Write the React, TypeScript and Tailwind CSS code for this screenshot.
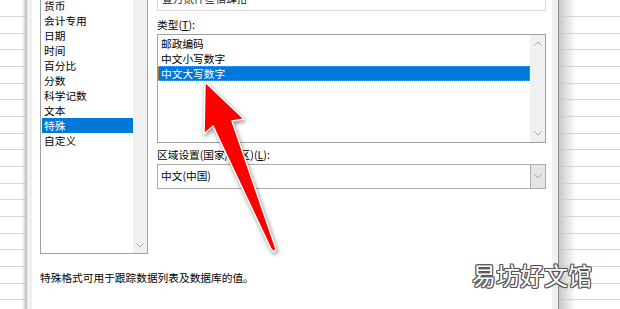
import React from "react";

// 常规 and 数值 sit above the visible area, so the list starts at 货币
const categories = ["货币", "会计专用", "日期", "时间", "百分比", "分数", "科学记数", "文本", "特殊", "自定义"];
const types = ["邮政编码", "中文小写数字", "中文大写数字"];

function Chevron({ up }: { up?: boolean }) {
  return (
    <svg width="8" height="5" viewBox="0 0 8 5" className="block">
      <polyline
        points={up ? "0.5,4.5 4,1 7.5,4.5" : "0.5,0.5 4,4 7.5,0.5"}
        fill="none"
        stroke="#a6a6a6"
        strokeWidth="1"
      />
    </svg>
  );
}

function SheetRows() {
  return (
    <div className="flex flex-col pt-[0.5px]">
      {Array.from({ length: 19 }).map((_, i) => (
        <div key={i} className="h-[16.66px] shrink-0 border-b border-[#d6d6d6]" />
      ))}
    </div>
  );
}

export default function App() {
  return (
    <div className="relative flex h-[309px] w-[620px] overflow-hidden bg-white font-['Noto_Sans_CJK_SC',sans-serif] text-[10.7px] text-black">
      {/* sheet behind the dialog, left */}
      <div className="relative w-[27px] shrink-0">
        <SheetRows />
        <div className="absolute inset-y-0 right-0 w-[5px] bg-linear-to-r from-transparent to-[#b9b9b9]" />
      </div>
      <div className="w-[5px] shrink-0 bg-[#f0f0f0]" />

      {/* tab page */}
      <div className="flex w-[520px] shrink-0 flex-col bg-white pl-[8px]">
        <div className="flex items-start gap-[9px]">
          {/* category list */}
          <div className="-mt-[4px] flex h-[258px] w-[108px] shrink-0 border border-[#a0a0a0]">
            <div className="flex flex-1 flex-col pl-[1px] pt-[1px]">
              {categories.map((c) => (
                <div
                  key={c}
                  className={`h-[15px] shrink-0 pl-[2px] leading-[15px] ${c === "特殊" ? "bg-[#0078d7] text-white" : ""}`}
                >
                  {c}
                </div>
              ))}
            </div>
            <div className="flex w-[14px] flex-col items-center justify-end bg-[#f0f0f0] pb-[5px]">
              <Chevron />
            </div>
          </div>

          {/* right column */}
          <div className="-mt-[20px] flex w-[389px] shrink-0 flex-col">
            <div className="h-[31px] border border-[#d9d9d9] pl-[4px] pt-[10px] leading-[15px] text-[#222]">
              壹万贰仟叁佰肆拾
            </div>

            <div className="mt-[7px] h-[14px] leading-[14px]">
              类型(<span className="underline underline-offset-1">T</span>):
            </div>
            <div className="mt-[2px] flex h-[109px] border border-[#a0a0a0]">
              <div className="flex flex-1 flex-col pt-[1px]">
                {types.map((t) => (
                  <div
                    key={t}
                    className={`h-[15px] shrink-0 pl-[3px] leading-[15px] ${
                      t === "中文大写数字"
                        ? "bg-[#0078d7] text-white outline-1 -outline-offset-1 outline-dotted outline-[#c8904a]"
                        : ""
                    }`}
                  >
                    {t}
                  </div>
                ))}
              </div>
              <div className="flex w-[15px] flex-col items-center justify-between bg-[#f0f0f0] py-[6px]">
                <Chevron up />
                <Chevron />
              </div>
            </div>

            <div className="mt-[5px] h-[14px] leading-[14px]">
              区域设置(国家/地区)(<span className="underline underline-offset-1">L</span>):
            </div>
            <div className="mt-[2px] flex h-[25px] items-center border border-[#adadad] pl-[3px]">
              <span>中文(中国)</span>
              <div className="ml-auto flex h-full w-[15px] items-center justify-center border-l border-[#adadad] bg-[#e5e5e5]">
                <Chevron />
              </div>
            </div>
          </div>
        </div>

        <div className="mt-[17px] leading-[14px]">特殊格式可用于跟踪数据列表及数据库的值。</div>
      </div>

      <div className="w-[6px] shrink-0 bg-[#f0f0f0]" />
      <div className="w-[1px] shrink-0 bg-[#8a8a8a]" />

      {/* sheet behind the dialog, right */}
      <div className="relative flex-1">
        <SheetRows />
        <div className="absolute inset-y-0 left-0 w-[17px] bg-linear-to-r from-[#c9c9c9] to-transparent" />
      </div>

      {/* red arrow annotation */}
      <svg
        className="pointer-events-none absolute left-0 top-0 drop-shadow-[1px_2px_2px_rgba(0,0,0,0.45)]"
        width="620"
        height="309"
        viewBox="0 0 620 309"
      >
        <polygon
          points="205,82 244,119 232,121 276,249 274,252 271,249 213,126 204,134"
          fill="#ff0000"
          stroke="#ffffff"
          strokeWidth="1.5"
          strokeLinejoin="round"
        />
      </svg>

      {/* watermark */}
      <div className="pointer-events-none absolute left-[472px] top-[263px] text-[24px] leading-none text-white [text-shadow:1px_0_0_#555,-1px_0_0_#555,0_1px_0_#555,0_-1px_0_#555,1px_1px_0_#555,-1px_-1px_0_#555,1px_-1px_0_#555,-1px_1px_0_#555]">
        易坊好文馆
      </div>
    </div>
  );
}
